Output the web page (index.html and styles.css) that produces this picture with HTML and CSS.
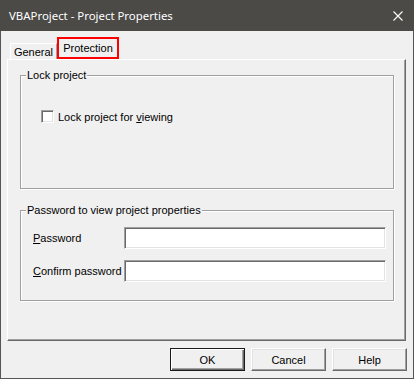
FILE: index.html
```html
<!DOCTYPE html>
<html lang="en">
<head>
    <meta charset="UTF-8">
    <title>VBAProject - Project Properties</title>
    <link rel="stylesheet" href="styles.css">
</head>
<body>
    <div class="window">
        <div class="titlebar">
            <span class="title">VBAProject - Project Properties</span>
            <svg class="close" width="10" height="10" viewBox="0 0 10 10">
                <path d="M0.5 0.5L9.5 9.5M9.5 0.5L0.5 9.5" stroke="#ffffff" stroke-width="1.1" fill="none"/>
            </svg>
        </div>

        <div class="client">
            <div class="tabs">
                <div class="tab">General</div>
                <div class="tab tab-active">Protection</div>
            </div>

            <div class="panel">
                <fieldset class="group group-lock">
                    <legend>Lock project</legend>
                    <label class="check">
                        <span class="checkbox"></span>
                        <span>Lock project for <u>v</u>iewing</span>
                    </label>
                </fieldset>

                <fieldset class="group group-pass">
                    <legend>Password to view project properties</legend>
                    <div class="field">
                        <label><u>P</u>assword</label>
                        <span class="input"></span>
                    </div>
                    <div class="field">
                        <label><u>C</u>onfirm password</label>
                        <span class="input"></span>
                    </div>
                </fieldset>
            </div>

            <div class="buttons">
                <button class="btn btn-default">OK</button>
                <button class="btn">Cancel</button>
                <button class="btn">Help</button>
            </div>
        </div>
    </div>
</body>
</html>
```

FILE: styles.css
```css
body, html {
    margin: 0;
    padding: 0;
    background: #f0f0f0;
}
.window {
    width: 414px;
    height: 379px;
    box-sizing: border-box;
    border: 1px solid #555555;
    border-top: none;
    background: #f0f0f0;
    font-family: 'Liberation Sans', Arial, sans-serif;
    font-size: 11px;
    color: #000;
}
.titlebar {
    height: 31px;
    margin: 0 -1px;
    background: #4b4a47;
    display: flex;
    align-items: center;
    justify-content: space-between;
    padding: 0 11px 0 9px;
}
.title {
    color: #ffffff;
    font-family: 'Noto Sans', sans-serif;
    font-size: 11.4px;
    padding-bottom: 1px;
}
.close {
    display: block;
}
.client {
    padding: 6px 6px 0 6px;
}

/* tabs */
.tabs {
    display: flex;
    align-items: flex-end;
    height: 22px;
    padding-left: 3px;
}
.tab {
    box-sizing: border-box;
    height: 16px;
    width: 47px;
    border-top: 1px solid #ffffff;
    border-left: 1px solid #ffffff;
    border-right: 1px solid #a0a0a0;
    box-shadow: 1px 0 0 #696969;
    display: flex;
    align-items: center;
    justify-content: center;
    padding-top: 1px;
}
.tab-active {
    height: 22px;
    width: 62px;
    border: 2px solid #ff0000;
    box-shadow: none;
    padding: 0 0 1px 0;
    background: #f0f0f0;
}

/* panel */
.panel {
    box-sizing: border-box;
    width: 399px;
    height: 282px;
    border-top: 1px solid #ffffff;
    border-left: 1px solid #ffffff;
    border-right: 1px solid #696969;
    border-bottom: 1px solid #696969;
    box-shadow: inset -1px -1px 0 #a0a0a0;
    padding: 9px 11px 0 12px;
}
.group {
    box-sizing: border-box;
    margin: 0;
    padding: 0;
    border: 1px solid #a0a0a0;
    box-shadow: 1px 1px 0 #ffffff, inset 1px 1px 0 #ffffff;
    width: 374px;
}
.group legend {
    margin-left: 5px;
    padding: 0 1px;
    line-height: 13px;
    background: #f0f0f0;
}
.group-lock {
    height: 120px;
}
.group-pass {
    height: 97px;
    margin-top: 15px;
    padding-top: 10px;
}

.check {
    display: flex;
    align-items: center;
    gap: 4px;
    margin: 28px 0 0 20px;
}
.checkbox {
    box-sizing: border-box;
    width: 13px;
    height: 13px;
    background: #ffffff;
    border-top: 1px solid #a0a0a0;
    border-left: 1px solid #a0a0a0;
    border-right: 1px solid #ffffff;
    border-bottom: 1px solid #ffffff;
    box-shadow: inset 1px 1px 0 #696969, inset -1px -1px 0 #e3e3e3;
}

.field {
    display: flex;
    align-items: center;
    height: 22px;
    margin-bottom: 11px;
    padding-left: 12px;
}
.field label {
    width: 91px;
}
.input {
    box-sizing: border-box;
    width: 262px;
    height: 22px;
    background: #ffffff;
    border-top: 1px solid #a0a0a0;
    border-left: 1px solid #a0a0a0;
    border-right: 1px solid #ffffff;
    border-bottom: 1px solid #ffffff;
    box-shadow: inset 1px 1px 0 #696969, inset -1px -1px 0 #e3e3e3;
}

/* buttons */
.buttons {
    display: flex;
    justify-content: flex-end;
    gap: 6px;
    margin-top: 7px;
}
.btn {
    box-sizing: border-box;
    width: 75px;
    height: 23px;
    padding: 0;
    font-family: 'Liberation Sans', Arial, sans-serif;
    font-size: 11px;
    color: #000;
    background: #f0f0f0;
    border-top: 1px solid #ffffff;
    border-left: 1px solid #ffffff;
    border-right: 1px solid #696969;
    border-bottom: 1px solid #696969;
    box-shadow: inset -1px -1px 0 #a0a0a0, inset 1px 1px 0 #e3e3e3;
}
.btn-default {
    border: 1px solid #1a1a1a;
    box-shadow: inset 1px 1px 0 #ffffff, inset -1px -1px 0 #696969, inset -2px -2px 0 #a0a0a0;
}
```
